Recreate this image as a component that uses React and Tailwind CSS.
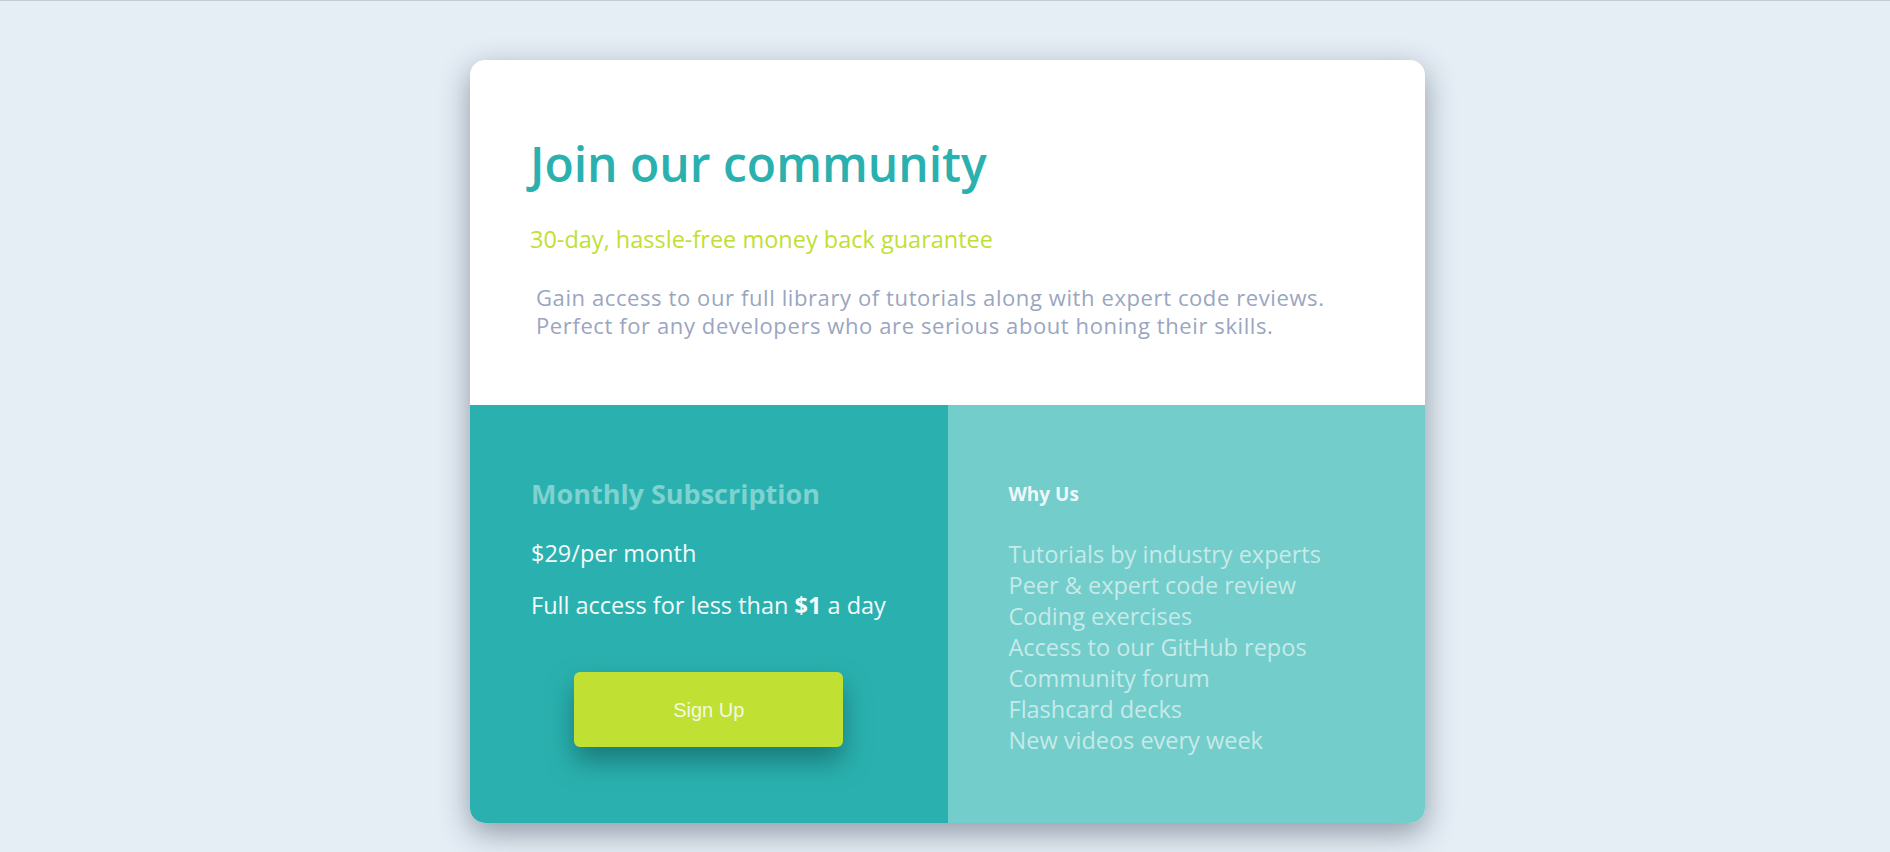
const perks = [
  'Tutorials by industry experts',
  'Peer & expert code review',
  'Coding exercises',
  'Access to our GitHub repos',
  'Community forum',
  'Flashcard decks',
  'New videos every week',
];

export default function App() {
  return (
    <div className="min-h-[852px] border-t border-[#c8ccd1] bg-[#e5edf5] pl-[5px] pt-[59px] font-['Open_Sans',sans-serif]">
      <div className="mx-auto w-[955px] overflow-hidden rounded-[15px] bg-white shadow-[0_10px_30px_rgba(40,55,70,0.45)]">
        {/* Intro */}
        <div className="h-[345px] pl-[60px] pr-[40px] pt-[76px]">
          <h1 className="text-[48px] font-semibold leading-[56px] text-[#2ab1af]">Join our community</h1>
          <p className="mt-[32px] text-[23.5px] leading-[30px] text-[#c0df34]">30-day, hassle-free money back guarantee</p>
          <p className="mt-[29px] pl-[6px] text-[22px] leading-[28px] tracking-[0.6px] text-[#9aa6bf]">
            Gain access to our full library of tutorials along with expert code reviews.
            <br />
            Perfect for any developers who are serious about honing their skills.
          </p>
        </div>

        {/* Pricing + perks */}
        <div className="grid h-[418px] grid-cols-2">
          <div className="flex flex-col bg-[#2ab1af] px-[61px] pt-[72px]">
            <h2 className="text-[27px] font-bold leading-[34px] text-[#7fd2cf]">Monthly Subscription</h2>
            <p className="mt-[27px] text-[23.5px] leading-[30px] text-[#f4fbfb]">$29/per month</p>
            <p className="mt-[22px] text-[23.5px] leading-[30px] text-[#f4fbfb]">
              Full access for less than <span className="font-bold">$1</span> a day
            </p>
            <div className="mt-[52px] flex justify-center">
              <button className="h-[75px] w-[269px] rounded-[6px] bg-[#c0e033] font-['Liberation_Sans',sans-serif] text-[20px] text-[#f3f8e4] shadow-[0_14px_26px_rgba(10,70,70,0.5)]">
                Sign Up
              </button>
            </div>
          </div>
          <div className="bg-[#73cdcb] px-[61px] pt-[77px]">
            <h3 className="text-[19px] font-bold leading-[24px] text-[#eef8f8]">Why Us</h3>
            <ul className="mt-[33px] text-[23.5px] leading-[31px] text-[#c6eae9]">
              {perks.map((p) => (
                <li key={p}>{p}</li>
              ))}
            </ul>
          </div>
        </div>
      </div>
    </div>
  );
}
